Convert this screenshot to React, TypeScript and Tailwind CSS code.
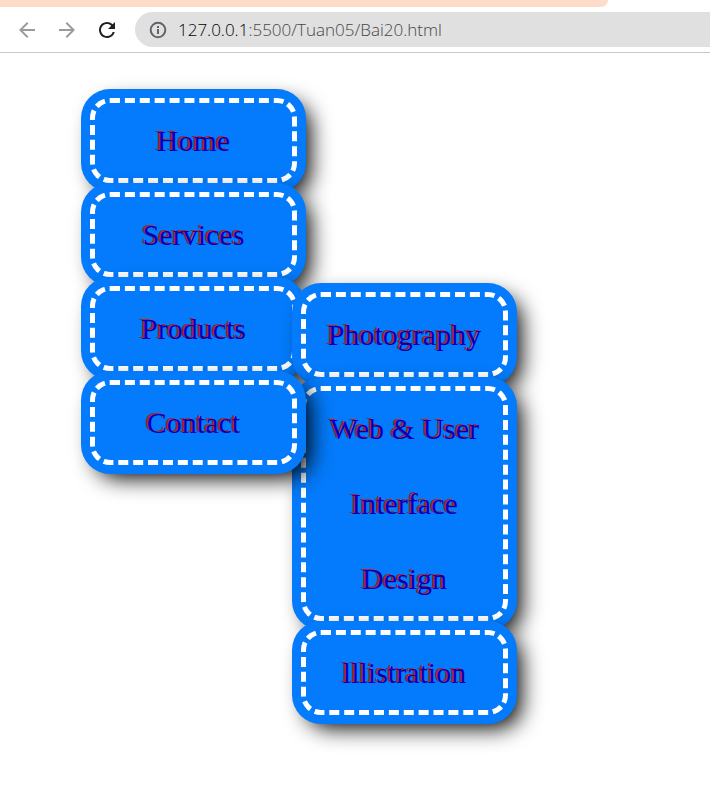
import { MdArrowBack, MdArrowForward, MdRefresh } from "react-icons/md";

type Item = { label: string; children?: Item[] };

const items: Item[] = [
  { label: "Home" },
  { label: "Services" },
  {
    label: "Products",
    children: [
      { label: "Photography" },
      { label: "Web & User Interface Design" },
      { label: "lllistration" },
    ],
  },
  { label: "Contact" },
];

function InfoIcon() {
  return (
    <svg width="18" height="18" viewBox="0 0 18 18" fill="none" stroke="#5f6368" strokeWidth="2" aria-hidden="true">
      <circle cx="9" cy="9" r="7.3" />
      <path d="M9 8v5M9 5v2" />
    </svg>
  );
}

function Menu({ entries }: { entries: Item[] }) {
  return (
    <ul className="flex w-[207px] flex-col gap-[9px]">
      {entries.map((entry) => (
        <li key={entry.label} className="relative">
          <a
            href="#"
            className="block rounded-[20px] border-[5px] border-dashed border-white bg-[#037bfc] px-5 text-center text-[30px] leading-[75px] text-[#0000b9] shadow-[0_0_0_9px_#037bfc,9px_9px_22px_4px_#000] [text-shadow:-2px_-1px_0_#b22222]"
          >
            {entry.label}
          </a>
          {entry.children && (
            <div className="absolute left-[211px] top-[6px]">
              <Menu entries={entry.children} />
            </div>
          )}
        </li>
      ))}
    </ul>
  );
}

export default function App() {
  return (
    <div className="min-h-screen overflow-hidden bg-white">
      <header className="border-b border-[#c8c8c8] font-['Open_Sans',sans-serif]">
        <div className="h-[7px] w-[608px] rounded-br-xl bg-[#fddcc9]" />
        <div className="flex items-center py-[5px] pl-[15px]">
          <button aria-label="Back" className="mr-4 text-[#9b9b9b]">
            <MdArrowBack size={24} />
          </button>
          <button aria-label="Forward" className="mr-4 text-[#9b9b9b]">
            <MdArrowForward size={24} />
          </button>
          <button aria-label="Reload" className="mr-4 text-[#202124]">
            <MdRefresh size={24} />
          </button>
          <div className="flex h-[35px] flex-1 items-center gap-[11px] rounded-l-full bg-[#e0e0e0] pl-[14px]">
            <InfoIcon />
            <span className="text-[17px] font-light leading-6 text-[#44474b]">
              <span className="text-black">127.0.0.1</span>:5500/Tuan05/Bai20.html
            </span>
          </div>
        </div>
      </header>
      <main className="pl-[90px] pt-[45px] font-['Liberation_Serif',serif]">
        <nav aria-label="Main">
          <Menu entries={items} />
        </nav>
      </main>
    </div>
  );
}
